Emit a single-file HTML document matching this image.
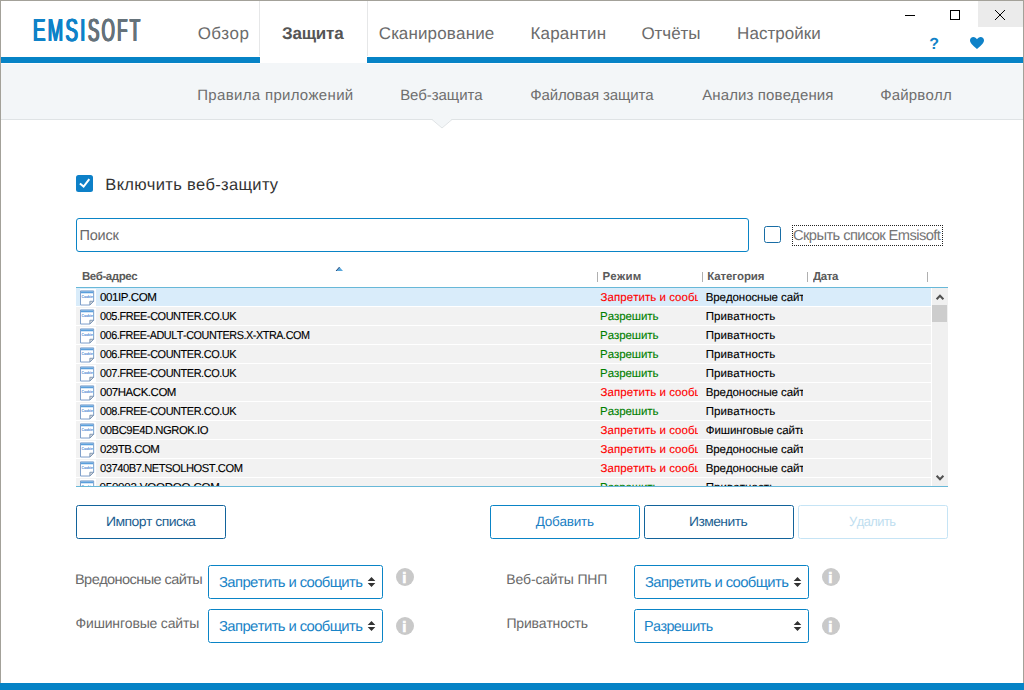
<!DOCTYPE html>
<html lang="ru"><head><meta charset="utf-8"><title>Emsisoft</title>
<style>
html,body{margin:0;padding:0;}
body{width:1024px;height:690px;position:relative;overflow:hidden;background:#fff;font-family:"Liberation Sans",sans-serif;}
.t{position:absolute;white-space:nowrap;line-height:1;font-kerning:none;text-rendering:geometricPrecision;}
.a{position:absolute;}
.btn{position:absolute;box-sizing:border-box;border:1.5px solid #1173b3;border-radius:2.5px;background:#fff;}
.sel{position:absolute;box-sizing:border-box;border:1.5px solid #0a84c6;border-radius:2.5px;background:#fff;}
.row{position:absolute;left:76px;width:855px;height:18px;background:#f2f2f2;}
.ico{position:absolute;left:4px;top:1px;width:16px;height:17px;background:#fff;}
.clip{position:absolute;overflow:hidden;height:18px;top:0;}
.row .t{-webkit-text-stroke:0.12px currentColor;}
</style></head><body>

<div class="a" style="left:0;top:0;width:1024px;height:690px;box-sizing:border-box;border:1px solid #a3a199;border-bottom:none;"></div>
<div class="a" style="left:1px;top:57px;width:1022px;height:6px;background:#0683c6;"></div>
<div class="a" style="left:1px;top:63px;width:1022px;height:56px;background:#f3f6f8;"></div>
<div class="a" style="left:1px;top:119px;width:1022px;height:1px;background:#dfe3e5;"></div>
<svg class="a" style="left:431px;top:119px" width="22" height="10" viewBox="0 0 22 10"><path d="M1 0 L11 9 L21 0 Z" fill="#f3f6f8"/><path d="M1 0.5 L11 9 L21 0.5" fill="none" stroke="#dfe3e5" stroke-width="1"/></svg>
<div class="a" style="left:260px;top:1px;width:107px;height:62px;background:#fff;"></div>
<div class="a" style="left:1px;top:63px;width:259px;height:1px;background:#fcfdfe;"></div>
<div class="a" style="left:367px;top:63px;width:656px;height:1px;background:#fcfdfe;"></div>
<div class="a" style="left:259px;top:1px;width:1px;height:55px;background:#e6e7e8;"></div>
<div class="a" style="left:367px;top:1px;width:1px;height:55px;background:#e6e7e8;"></div>
<div class="a" style="left:0;top:683px;width:1024px;height:7px;background:#0683c6;"></div>
<span class="t" style="left:32.95px;top:14px;font-size:32px;color:#0f82c8;letter-spacing:4.026px;transform-origin:0 0;transform:scaleX(0.5800);text-shadow:1.1px 0 0 #0f82c8,-1.1px 0 0 #0f82c8,0.5px 0 0 #0f82c8,-0.5px 0 0 #0f82c8;">EMSI</span>
<span class="t" style="left:87.60px;top:14px;font-size:32px;color:#65727a;letter-spacing:4.325px;transform-origin:0 0;transform:scaleX(0.5300);text-shadow:1.3px 0 0 #65727a,-1.3px 0 0 #65727a,0.6px 0 0 #65727a,-0.6px 0 0 #65727a;">SOFT</span>
<div class="a" style="left:978px;top:1px;width:45px;height:26px;background:#ebebeb;"></div>
<svg class="a" style="left:900px;top:5px" width="120" height="20" viewBox="0 0 120 20"><path d="M5 10.5 H15" stroke="#000" stroke-width="1" fill="none"/><rect x="50.5" y="5.5" width="9" height="9" fill="none" stroke="#000" stroke-width="1"/><path d="M95 5 L105 15 M105 5 L95 15" stroke="#000" stroke-width="1" fill="none"/></svg>
<span class="t" style="left:929.25px;top:37px;font-size:16px;letter-spacing:0.000px;color:#0f82c8;font-weight:bold;">?</span>
<svg class="a" style="left:969px;top:36px" width="16" height="14" viewBox="0 0 16 14"><path d="M8 13 C3 9 1 6.8 1 4.3 C1 2.3 2.5 1 4.3 1 C5.9 1 7.3 2 8 3.3 C8.7 2 10.1 1 11.7 1 C13.5 1 15 2.3 15 4.3 C15 6.8 13 9 8 13 Z" fill="#0f82c8"/></svg>
<span class="t" style="left:197.65px;top:25px;font-size:17px;letter-spacing:0.387px;color:#6b6b6b;">Обзор</span>
<span class="t" style="left:282.00px;top:25px;font-size:17px;letter-spacing:-0.210px;color:#555;font-weight:bold;">Защита</span>
<span class="t" style="left:378.75px;top:25px;font-size:17px;letter-spacing:0.159px;color:#6b6b6b;">Сканирование</span>
<span class="t" style="left:530.50px;top:25px;font-size:17px;letter-spacing:0.179px;color:#6b6b6b;">Карантин</span>
<span class="t" style="left:641.45px;top:25px;font-size:17px;letter-spacing:-0.040px;color:#6b6b6b;">Отчёты</span>
<span class="t" style="left:737.10px;top:25px;font-size:17px;letter-spacing:0.031px;color:#6b6b6b;">Настройки</span>
<span class="t" style="left:197.25px;top:88px;font-size:15px;letter-spacing:0.326px;color:#6e6e6e;">Правила приложений</span>
<span class="t" style="left:400.15px;top:88px;font-size:15px;letter-spacing:-0.072px;color:#6e6e6e;">Веб-защита</span>
<span class="t" style="left:530.15px;top:88px;font-size:15px;letter-spacing:-0.104px;color:#6e6e6e;">Файловая защита</span>
<span class="t" style="left:702.20px;top:88px;font-size:15px;letter-spacing:0.120px;color:#6e6e6e;">Анализ поведения</span>
<span class="t" style="left:880.25px;top:88px;font-size:15px;letter-spacing:0.157px;color:#6e6e6e;">Файрволл</span>
<div class="a" style="left:76px;top:175px;width:17px;height:17px;border-radius:2.5px;background:#0d80c8;"></div>
<svg class="a" style="left:76px;top:175px" width="17" height="17" viewBox="0 0 17 17"><path d="M3.9 8.5 L7.6 11.6 L13.3 4.2" fill="none" stroke="#fff" stroke-width="2"/></svg>
<span class="t" style="left:105.35px;top:177px;font-size:16.5px;letter-spacing:0.314px;color:#333;">Включить веб-защиту</span>
<div class="a" style="left:76px;top:218px;width:673px;height:34px;box-sizing:border-box;border:1.5px solid #0a84c6;border-radius:3px;background:#fff;"></div>
<span class="t" style="left:79.55px;top:229px;font-size:14.5px;letter-spacing:-0.225px;color:#6a6a6a;">Поиск</span>
<div class="a" style="left:764px;top:226px;width:17px;height:17px;box-sizing:border-box;border:1.5px solid #186da5;border-radius:2.5px;background:#fff;"></div>
<div class="a" style="left:792px;top:225px;width:151px;height:21px;box-sizing:border-box;border:1px dotted #222;"></div>
<span class="t" style="left:793.14px;top:229px;font-size:14.5px;color:#757575;transform-origin:0 0;transform:scaleX(1.0140);letter-spacing:-0.58px;">Скрыть список Emsisoft</span>
<span class="t" style="left:81.75px;top:272px;font-size:11.5px;color:#5a5a5a;transform-origin:0 0;transform:scaleX(1.0033);letter-spacing:-0.46px;font-weight:bold;">Веб-адрес</span>
<span class="t" style="left:602.45px;top:272px;font-size:11.5px;letter-spacing:0.262px;color:#5a5a5a;font-weight:bold;">Режим</span>
<span class="t" style="left:707.25px;top:272px;font-size:11.5px;letter-spacing:-0.100px;color:#5a5a5a;font-weight:bold;">Категория</span>
<span class="t" style="left:813.20px;top:272px;font-size:11.5px;color:#5a5a5a;transform-origin:0 0;transform:scaleX(1.0051);letter-spacing:-0.46px;font-weight:bold;">Дата</span>
<div class="a" style="left:597px;top:272px;width:1px;height:10px;background:#b0b0b0;"></div>
<div class="a" style="left:702px;top:272px;width:1px;height:10px;background:#b0b0b0;"></div>
<div class="a" style="left:807px;top:272px;width:1px;height:10px;background:#b0b0b0;"></div>
<div class="a" style="left:927px;top:272px;width:1px;height:10px;background:#b0b0b0;"></div>
<svg class="a" style="left:335px;top:266px" width="9" height="6" viewBox="0 0 9 6"><path d="M1 5 L4.5 1 L8 5 Z" fill="#5aa8dc"/><path d="M1 5 L4.5 1" stroke="#2a4a7a" stroke-width="1" fill="none"/></svg>
<div class="a" style="left:76px;top:287px;width:872px;height:200px;box-sizing:border-box;border-top:1px solid #68b8d8;border-bottom:1px solid #68b8d8;overflow:hidden;background:#fff;" id="list">
<div class="row" style="left:0;top:0px;background:#d9ecfa;">
<svg class="ico" width="17" height="17" viewBox="0 0 17 17"><path d="M0.5 1.5 H14.5 V12.5 L10.5 16.5 H0.5 Z" fill="#fff" stroke="#7398c6" stroke-width="1"/><rect x="1" y="2" width="13" height="2" fill="#5a9fdc"/><path d="M10.5 16.5 V12.5 H14.5 Z" fill="#dcdcdc" stroke="#7b93b3" stroke-width="1"/><text x="1.6" y="9.3" font-size="4.3" font-weight="bold" fill="#3a7fcf" textLength="12" lengthAdjust="spacingAndGlyphs">Cookie</text></svg>
<span class="t" style="left:23.50px;top:5px;font-size:11.5px;color:#000;transform-origin:0 0;transform:scaleX(1.0078);letter-spacing:-0.46px;">001IP.COM</span>
<div class="clip" style="left:521px;width:101.20000000000005px;"><span class="t" style="left:3.60px;top:5px;font-size:11.5px;letter-spacing:0.043px;color:#ff0000;">Запретить и сообщить</span></div>
<div class="clip" style="left:626px;width:101.20000000000005px;"><span class="t" style="left:3.70px;top:5px;font-size:11.5px;letter-spacing:-0.079px;color:#000;">Вредоносные сайты</span></div>
</div>
<div class="row" style="left:0;top:19px;background:#f2f2f2;">
<svg class="ico" width="17" height="17" viewBox="0 0 17 17"><path d="M0.5 1.5 H14.5 V12.5 L10.5 16.5 H0.5 Z" fill="#fff" stroke="#7398c6" stroke-width="1"/><rect x="1" y="2" width="13" height="2" fill="#5a9fdc"/><path d="M10.5 16.5 V12.5 H14.5 Z" fill="#dcdcdc" stroke="#7b93b3" stroke-width="1"/><text x="1.6" y="9.3" font-size="4.3" font-weight="bold" fill="#3a7fcf" textLength="12" lengthAdjust="spacingAndGlyphs">Cookie</text></svg>
<span class="t" style="left:23.52px;top:5px;font-size:11.5px;color:#000;transform-origin:0 0;transform:scaleX(0.9505);letter-spacing:-0.46px;">005.FREE-COUNTER.CO.UK</span>
<div class="clip" style="left:521px;width:101.20000000000005px;"><span class="t" style="left:3.10px;top:5px;font-size:11.5px;letter-spacing:-0.075px;color:#008000;">Разрешить</span></div>
<div class="clip" style="left:626px;width:101.20000000000005px;"><span class="t" style="left:3.70px;top:5px;font-size:11.5px;letter-spacing:0.085px;color:#000;">Приватность</span></div>
</div>
<div class="row" style="left:0;top:38px;background:#f2f2f2;">
<svg class="ico" width="17" height="17" viewBox="0 0 17 17"><path d="M0.5 1.5 H14.5 V12.5 L10.5 16.5 H0.5 Z" fill="#fff" stroke="#7398c6" stroke-width="1"/><rect x="1" y="2" width="13" height="2" fill="#5a9fdc"/><path d="M10.5 16.5 V12.5 H14.5 Z" fill="#dcdcdc" stroke="#7b93b3" stroke-width="1"/><text x="1.6" y="9.3" font-size="4.3" font-weight="bold" fill="#3a7fcf" textLength="12" lengthAdjust="spacingAndGlyphs">Cookie</text></svg>
<span class="t" style="left:23.53px;top:5px;font-size:11.5px;color:#000;transform-origin:0 0;transform:scaleX(0.9413);letter-spacing:-0.46px;">006.FREE-ADULT-COUNTERS.X-XTRA.COM</span>
<div class="clip" style="left:521px;width:101.20000000000005px;"><span class="t" style="left:3.10px;top:5px;font-size:11.5px;letter-spacing:-0.075px;color:#008000;">Разрешить</span></div>
<div class="clip" style="left:626px;width:101.20000000000005px;"><span class="t" style="left:3.70px;top:5px;font-size:11.5px;letter-spacing:0.085px;color:#000;">Приватность</span></div>
</div>
<div class="row" style="left:0;top:57px;background:#f2f2f2;">
<svg class="ico" width="17" height="17" viewBox="0 0 17 17"><path d="M0.5 1.5 H14.5 V12.5 L10.5 16.5 H0.5 Z" fill="#fff" stroke="#7398c6" stroke-width="1"/><rect x="1" y="2" width="13" height="2" fill="#5a9fdc"/><path d="M10.5 16.5 V12.5 H14.5 Z" fill="#dcdcdc" stroke="#7b93b3" stroke-width="1"/><text x="1.6" y="9.3" font-size="4.3" font-weight="bold" fill="#3a7fcf" textLength="12" lengthAdjust="spacingAndGlyphs">Cookie</text></svg>
<span class="t" style="left:23.52px;top:5px;font-size:11.5px;color:#000;transform-origin:0 0;transform:scaleX(0.9505);letter-spacing:-0.46px;">006.FREE-COUNTER.CO.UK</span>
<div class="clip" style="left:521px;width:101.20000000000005px;"><span class="t" style="left:3.10px;top:5px;font-size:11.5px;letter-spacing:-0.075px;color:#008000;">Разрешить</span></div>
<div class="clip" style="left:626px;width:101.20000000000005px;"><span class="t" style="left:3.70px;top:5px;font-size:11.5px;letter-spacing:0.085px;color:#000;">Приватность</span></div>
</div>
<div class="row" style="left:0;top:76px;background:#f2f2f2;">
<svg class="ico" width="17" height="17" viewBox="0 0 17 17"><path d="M0.5 1.5 H14.5 V12.5 L10.5 16.5 H0.5 Z" fill="#fff" stroke="#7398c6" stroke-width="1"/><rect x="1" y="2" width="13" height="2" fill="#5a9fdc"/><path d="M10.5 16.5 V12.5 H14.5 Z" fill="#dcdcdc" stroke="#7b93b3" stroke-width="1"/><text x="1.6" y="9.3" font-size="4.3" font-weight="bold" fill="#3a7fcf" textLength="12" lengthAdjust="spacingAndGlyphs">Cookie</text></svg>
<span class="t" style="left:23.52px;top:5px;font-size:11.5px;color:#000;transform-origin:0 0;transform:scaleX(0.9505);letter-spacing:-0.46px;">007.FREE-COUNTER.CO.UK</span>
<div class="clip" style="left:521px;width:101.20000000000005px;"><span class="t" style="left:3.10px;top:5px;font-size:11.5px;letter-spacing:-0.075px;color:#008000;">Разрешить</span></div>
<div class="clip" style="left:626px;width:101.20000000000005px;"><span class="t" style="left:3.70px;top:5px;font-size:11.5px;letter-spacing:0.085px;color:#000;">Приватность</span></div>
</div>
<div class="row" style="left:0;top:95px;background:#f2f2f2;">
<svg class="ico" width="17" height="17" viewBox="0 0 17 17"><path d="M0.5 1.5 H14.5 V12.5 L10.5 16.5 H0.5 Z" fill="#fff" stroke="#7398c6" stroke-width="1"/><rect x="1" y="2" width="13" height="2" fill="#5a9fdc"/><path d="M10.5 16.5 V12.5 H14.5 Z" fill="#dcdcdc" stroke="#7b93b3" stroke-width="1"/><text x="1.6" y="9.3" font-size="4.3" font-weight="bold" fill="#3a7fcf" textLength="12" lengthAdjust="spacingAndGlyphs">Cookie</text></svg>
<span class="t" style="left:23.50px;top:5px;font-size:11.5px;color:#000;transform-origin:0 0;transform:scaleX(0.9980);letter-spacing:-0.46px;">007HACK.COM</span>
<div class="clip" style="left:521px;width:101.20000000000005px;"><span class="t" style="left:3.60px;top:5px;font-size:11.5px;letter-spacing:0.043px;color:#ff0000;">Запретить и сообщить</span></div>
<div class="clip" style="left:626px;width:101.20000000000005px;"><span class="t" style="left:3.70px;top:5px;font-size:11.5px;letter-spacing:-0.079px;color:#000;">Вредоносные сайты</span></div>
</div>
<div class="row" style="left:0;top:114px;background:#f2f2f2;">
<svg class="ico" width="17" height="17" viewBox="0 0 17 17"><path d="M0.5 1.5 H14.5 V12.5 L10.5 16.5 H0.5 Z" fill="#fff" stroke="#7398c6" stroke-width="1"/><rect x="1" y="2" width="13" height="2" fill="#5a9fdc"/><path d="M10.5 16.5 V12.5 H14.5 Z" fill="#dcdcdc" stroke="#7b93b3" stroke-width="1"/><text x="1.6" y="9.3" font-size="4.3" font-weight="bold" fill="#3a7fcf" textLength="12" lengthAdjust="spacingAndGlyphs">Cookie</text></svg>
<span class="t" style="left:23.52px;top:5px;font-size:11.5px;color:#000;transform-origin:0 0;transform:scaleX(0.9505);letter-spacing:-0.46px;">008.FREE-COUNTER.CO.UK</span>
<div class="clip" style="left:521px;width:101.20000000000005px;"><span class="t" style="left:3.10px;top:5px;font-size:11.5px;letter-spacing:-0.075px;color:#008000;">Разрешить</span></div>
<div class="clip" style="left:626px;width:101.20000000000005px;"><span class="t" style="left:3.70px;top:5px;font-size:11.5px;letter-spacing:0.085px;color:#000;">Приватность</span></div>
</div>
<div class="row" style="left:0;top:133px;background:#f2f2f2;">
<svg class="ico" width="17" height="17" viewBox="0 0 17 17"><path d="M0.5 1.5 H14.5 V12.5 L10.5 16.5 H0.5 Z" fill="#fff" stroke="#7398c6" stroke-width="1"/><rect x="1" y="2" width="13" height="2" fill="#5a9fdc"/><path d="M10.5 16.5 V12.5 H14.5 Z" fill="#dcdcdc" stroke="#7b93b3" stroke-width="1"/><text x="1.6" y="9.3" font-size="4.3" font-weight="bold" fill="#3a7fcf" textLength="12" lengthAdjust="spacingAndGlyphs">Cookie</text></svg>
<span class="t" style="left:23.51px;top:5px;font-size:11.5px;color:#000;transform-origin:0 0;transform:scaleX(0.9783);letter-spacing:-0.46px;">00BC9E4D.NGROK.IO</span>
<div class="clip" style="left:521px;width:101.20000000000005px;"><span class="t" style="left:3.60px;top:5px;font-size:11.5px;letter-spacing:0.043px;color:#ff0000;">Запретить и сообщить</span></div>
<div class="clip" style="left:626px;width:101.20000000000005px;"><span class="t" style="left:3.75px;top:5px;font-size:11.5px;letter-spacing:-0.082px;color:#000;">Фишинговые сайты</span></div>
</div>
<div class="row" style="left:0;top:152px;background:#f2f2f2;">
<svg class="ico" width="17" height="17" viewBox="0 0 17 17"><path d="M0.5 1.5 H14.5 V12.5 L10.5 16.5 H0.5 Z" fill="#fff" stroke="#7398c6" stroke-width="1"/><rect x="1" y="2" width="13" height="2" fill="#5a9fdc"/><path d="M10.5 16.5 V12.5 H14.5 Z" fill="#dcdcdc" stroke="#7b93b3" stroke-width="1"/><text x="1.6" y="9.3" font-size="4.3" font-weight="bold" fill="#3a7fcf" textLength="12" lengthAdjust="spacingAndGlyphs">Cookie</text></svg>
<span class="t" style="left:23.50px;top:5px;font-size:11.5px;color:#000;transform-origin:0 0;transform:scaleX(0.9946);letter-spacing:-0.46px;">029TB.COM</span>
<div class="clip" style="left:521px;width:101.20000000000005px;"><span class="t" style="left:3.60px;top:5px;font-size:11.5px;letter-spacing:0.043px;color:#ff0000;">Запретить и сообщить</span></div>
<div class="clip" style="left:626px;width:101.20000000000005px;"><span class="t" style="left:3.70px;top:5px;font-size:11.5px;letter-spacing:-0.079px;color:#000;">Вредоносные сайты</span></div>
</div>
<div class="row" style="left:0;top:171px;background:#f2f2f2;">
<svg class="ico" width="17" height="17" viewBox="0 0 17 17"><path d="M0.5 1.5 H14.5 V12.5 L10.5 16.5 H0.5 Z" fill="#fff" stroke="#7398c6" stroke-width="1"/><rect x="1" y="2" width="13" height="2" fill="#5a9fdc"/><path d="M10.5 16.5 V12.5 H14.5 Z" fill="#dcdcdc" stroke="#7b93b3" stroke-width="1"/><text x="1.6" y="9.3" font-size="4.3" font-weight="bold" fill="#3a7fcf" textLength="12" lengthAdjust="spacingAndGlyphs">Cookie</text></svg>
<span class="t" style="left:23.52px;top:5px;font-size:11.5px;color:#000;transform-origin:0 0;transform:scaleX(0.9686);letter-spacing:-0.46px;">03740B7.NETSOLHOST.COM</span>
<div class="clip" style="left:521px;width:101.20000000000005px;"><span class="t" style="left:3.60px;top:5px;font-size:11.5px;letter-spacing:0.043px;color:#ff0000;">Запретить и сообщить</span></div>
<div class="clip" style="left:626px;width:101.20000000000005px;"><span class="t" style="left:3.70px;top:5px;font-size:11.5px;letter-spacing:-0.079px;color:#000;">Вредоносные сайты</span></div>
</div>
<div class="row" style="left:0;top:190px;background:#f2f2f2;">
<svg class="ico" width="17" height="17" viewBox="0 0 17 17"><path d="M0.5 1.5 H14.5 V12.5 L10.5 16.5 H0.5 Z" fill="#fff" stroke="#7398c6" stroke-width="1"/><rect x="1" y="2" width="13" height="2" fill="#5a9fdc"/><path d="M10.5 16.5 V12.5 H14.5 Z" fill="#dcdcdc" stroke="#7b93b3" stroke-width="1"/><text x="1.6" y="9.3" font-size="4.3" font-weight="bold" fill="#3a7fcf" textLength="12" lengthAdjust="spacingAndGlyphs">Cookie</text></svg>
<span class="t" style="left:23.50px;top:5px;font-size:11.5px;letter-spacing:-0.188px;color:#000;">050003.VOODOO.COM</span>
<div class="clip" style="left:521px;width:101.20000000000005px;"><span class="t" style="left:3.10px;top:5px;font-size:11.5px;letter-spacing:-0.075px;color:#008000;">Разрешить</span></div>
<div class="clip" style="left:626px;width:101.20000000000005px;"><span class="t" style="left:3.70px;top:5px;font-size:11.5px;letter-spacing:0.085px;color:#000;">Приватность</span></div>
</div>
<div class="a" style="left:856px;top:0;width:16px;height:198px;background:#f0f0f0;"></div>
<div class="a" style="left:856px;top:17px;width:15px;height:17px;background:#cdcdcd;"></div>
<svg class="a" style="left:859px;top:5px" width="10" height="8" viewBox="0 0 10 8"><path d="M1.6 6.2 L5 2.7 L8.4 6.2" fill="none" stroke="#505050" stroke-width="2"/></svg>
<svg class="a" style="left:859px;top:186px" width="10" height="8" viewBox="0 0 10 8"><path d="M1.6 1.8 L5 5.3 L8.4 1.8" fill="none" stroke="#505050" stroke-width="2"/></svg>
</div>
<div class="btn" style="left:76px;top:505px;width:150px;height:34px;border-color:#12639b;"></div>
<span class="t" style="left:105.76px;top:515px;font-size:13.5px;color:#1d5f91;transform-origin:0 0;transform:scaleX(1.0372);letter-spacing:-0.54px;">Импорт списка</span>
<div class="btn" style="left:490px;top:505px;width:150px;height:34px;border-color:#0a84c6;"></div>
<span class="t" style="left:535.80px;top:515px;font-size:13.5px;letter-spacing:-0.221px;color:#1a80c4;">Добавить</span>
<div class="btn" style="left:644px;top:505px;width:150px;height:34px;border-color:#12639b;"></div>
<span class="t" style="left:689.47px;top:515px;font-size:13.5px;color:#1d5f91;transform-origin:0 0;transform:scaleX(1.0276);letter-spacing:-0.54px;">Изменить</span>
<div class="btn" style="left:798px;top:505px;width:150px;height:34px;border-color:#c6e4f5;"></div>
<span class="t" style="left:848.92px;top:515px;font-size:13.5px;color:#c0def0;transform-origin:0 0;transform:scaleX(0.9532);letter-spacing:-0.54px;">Удалить</span>
<span class="t" style="left:75.00px;top:572px;font-size:14px;color:#6a6a6a;transform-origin:0 0;transform:scaleX(1.0390);letter-spacing:-0.56px;">Вредоносные сайты</span>
<span class="t" style="left:75.55px;top:616px;font-size:14px;letter-spacing:-0.183px;color:#6a6a6a;">Фишинговые сайты</span>
<span class="t" style="left:506.25px;top:572px;font-size:14px;letter-spacing:-0.163px;color:#6a6a6a;">Веб-сайты ПНП</span>
<span class="t" style="left:506.50px;top:616px;font-size:14px;letter-spacing:-0.200px;color:#6a6a6a;">Приватность</span>
<div class="sel" style="left:208px;top:565px;width:175px;height:34px;"></div>
<span class="t" style="left:219.09px;top:576px;font-size:14.5px;color:#1a84c7;transform-origin:0 0;transform:scaleX(1.0227);letter-spacing:-0.58px;">Запретить и сообщить</span>
<svg class="a" style="left:366.7px;top:576.3px" width="9" height="12" viewBox="0 0 9 12"><path d="M0.7 5 L4.5 0.9 L8.3 5 Z M0.7 7 L4.5 11.1 L8.3 7 Z" fill="#333"/></svg>
<div class="sel" style="left:208px;top:609px;width:175px;height:34px;"></div>
<span class="t" style="left:219.09px;top:620px;font-size:14.5px;color:#1a84c7;transform-origin:0 0;transform:scaleX(1.0227);letter-spacing:-0.58px;">Запретить и сообщить</span>
<svg class="a" style="left:366.7px;top:620.3px" width="9" height="12" viewBox="0 0 9 12"><path d="M0.7 5 L4.5 0.9 L8.3 5 Z M0.7 7 L4.5 11.1 L8.3 7 Z" fill="#333"/></svg>
<div class="sel" style="left:634px;top:565px;width:175px;height:34px;"></div>
<span class="t" style="left:645.09px;top:576px;font-size:14.5px;color:#1a84c7;transform-origin:0 0;transform:scaleX(1.0227);letter-spacing:-0.58px;">Запретить и сообщить</span>
<svg class="a" style="left:792.7px;top:576.3px" width="9" height="12" viewBox="0 0 9 12"><path d="M0.7 5 L4.5 0.9 L8.3 5 Z M0.7 7 L4.5 11.1 L8.3 7 Z" fill="#333"/></svg>
<div class="sel" style="left:634px;top:609px;width:175px;height:34px;"></div>
<span class="t" style="left:644.36px;top:620px;font-size:14.5px;color:#1a84c7;transform-origin:0 0;transform:scaleX(0.9903);letter-spacing:-0.58px;">Разрешить</span>
<svg class="a" style="left:792.7px;top:620.3px" width="9" height="12" viewBox="0 0 9 12"><path d="M0.7 5 L4.5 0.9 L8.3 5 Z M0.7 7 L4.5 11.1 L8.3 7 Z" fill="#333"/></svg>
<div class="a" style="left:396px;top:568px;width:18px;height:18px;border-radius:9px;background:#c9c9c9;"></div>
<span class="t" style="left:402.30px;top:571px;font-size:15px;letter-spacing:0.000px;color:#fff;font-weight:bold;-webkit-text-stroke:0.7px #fff;">i</span>
<div class="a" style="left:396px;top:617px;width:18px;height:18px;border-radius:9px;background:#c9c9c9;"></div>
<span class="t" style="left:402.30px;top:620px;font-size:15px;letter-spacing:0.000px;color:#fff;font-weight:bold;-webkit-text-stroke:0.7px #fff;">i</span>
<div class="a" style="left:822px;top:568px;width:18px;height:18px;border-radius:9px;background:#c9c9c9;"></div>
<span class="t" style="left:828.30px;top:571px;font-size:15px;letter-spacing:0.000px;color:#fff;font-weight:bold;-webkit-text-stroke:0.7px #fff;">i</span>
<div class="a" style="left:822px;top:617px;width:18px;height:18px;border-radius:9px;background:#c9c9c9;"></div>
<span class="t" style="left:828.30px;top:620px;font-size:15px;letter-spacing:0.000px;color:#fff;font-weight:bold;-webkit-text-stroke:0.7px #fff;">i</span>
</body></html>
